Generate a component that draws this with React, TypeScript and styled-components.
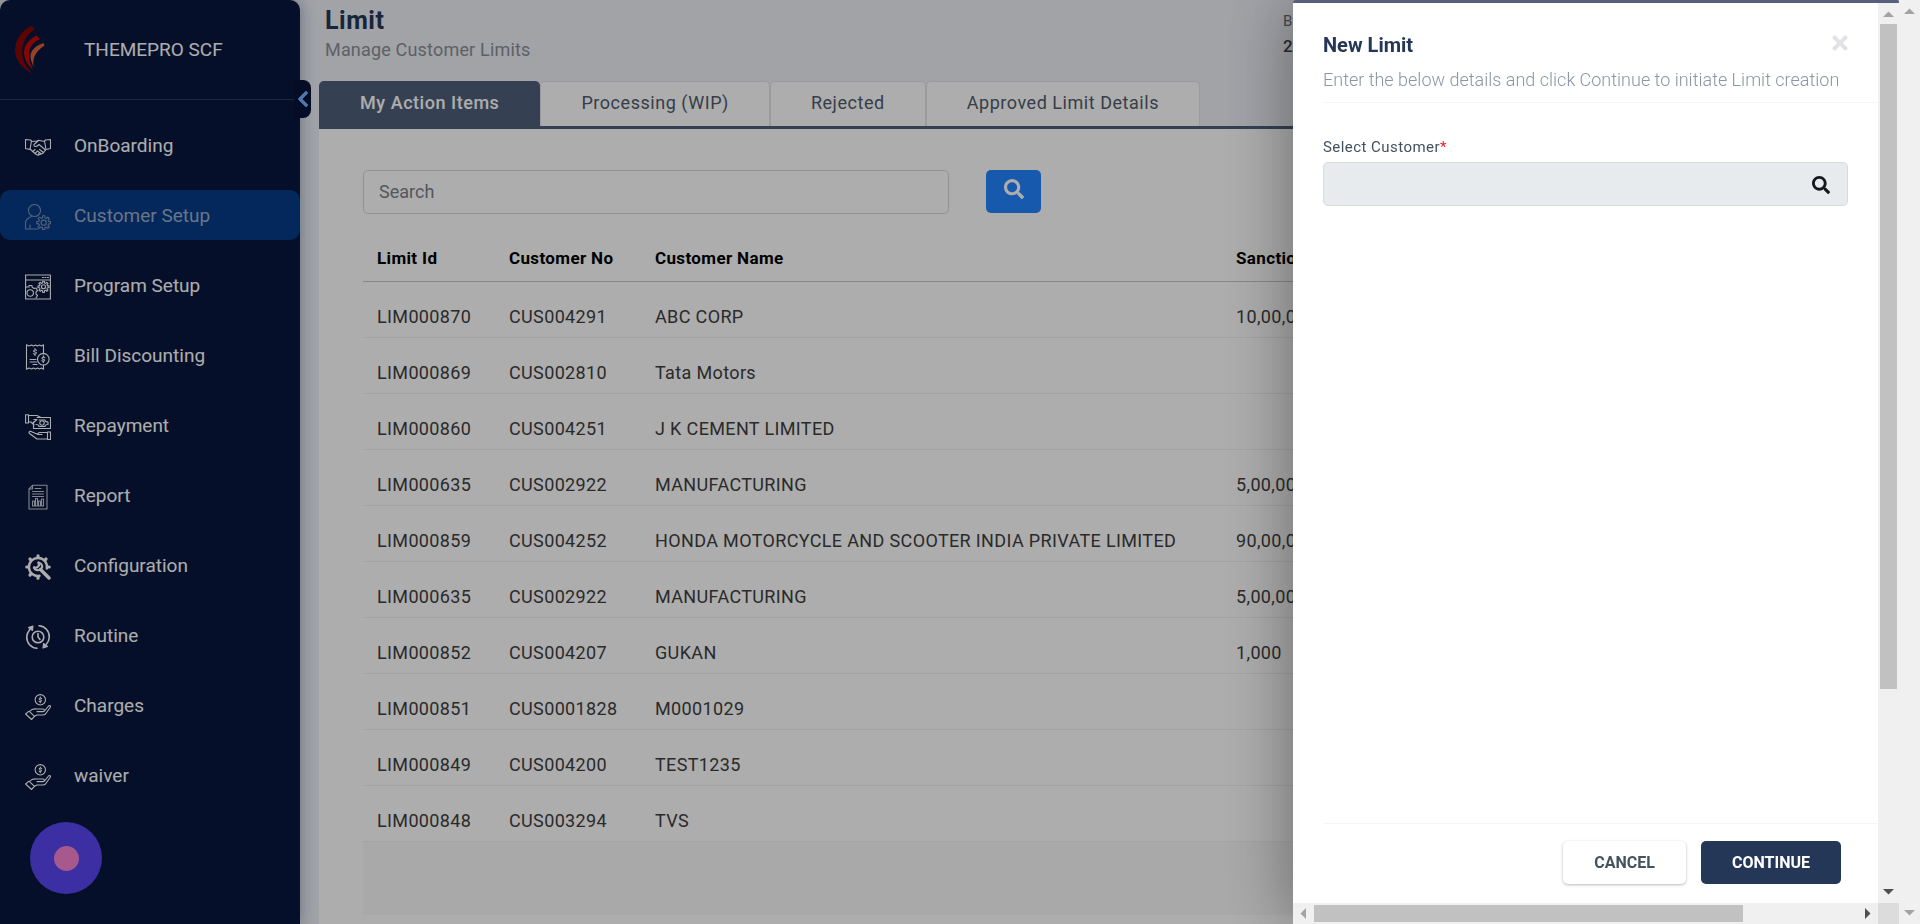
import React from "react";
import styled, { createGlobalStyle, css } from "styled-components";
import { FaChevronLeft, FaSearch, FaTimes } from "react-icons/fa";

const GlobalStyle = createGlobalStyle`
  *, *::before, *::after { box-sizing: border-box; }
  body {
    margin: 0;
    font-family: Roboto, "Liberation Sans", sans-serif;
    font-size: 18px;
    line-height: 24px;
    color: #3e3e3e;
    overflow: hidden;
  }
  button, input { font: inherit; letter-spacing: inherit; }
`;

const Page = styled.div`
  display: flex;
  height: 100vh;
  overflow: hidden;
  background: #edf0f7;
`;

const Shell = styled.div`
  position: relative;
  display: flex;
  flex: 1;
  min-width: 0;
`;

const Backdrop = styled.div`
  position: absolute;
  inset: 0;
  z-index: 2;
  background: rgba(0, 0, 0, 0.32);
`;

/* Sidebar */

const Sidebar = styled.aside`
  position: relative;
  z-index: 1;
  flex: none;
  width: 300px;
  background: #09173d;
  border-radius: 10px 10px 0 0;
  box-shadow: 0 0 16px rgba(20, 40, 70, 0.4);
  color: #fff;
  font-size: 19px;
`;

const Brand = styled.div`
  display: flex;
  align-items: center;
  gap: 39px;
  height: 100px;
  margin-right: 5px;
  padding-left: 15px;
  border-bottom: 1px solid #2b3558;
`;

const CollapseButton = styled.button`
  position: absolute;
  top: 80px;
  right: -11px;
  display: flex;
  align-items: center;
  justify-content: center;
  width: 17px;
  height: 38px;
  padding: 0;
  border: 0;
  border-radius: 0 8px 8px 0;
  background: #061238;
  color: #74b0ff;
  font-size: 18px;

  svg {
    flex: none;
    stroke: currentColor;
    stroke-width: 24;
  }
`;

const NavList = styled.ul`
  display: flex;
  flex-direction: column;
  gap: 20px;
  margin: 0;
  padding: 20px 0 0;
  list-style: none;
`;

const NavLink = styled.a<{ $active?: boolean }>`
  display: flex;
  align-items: center;
  gap: 23px;
  height: 50px;
  padding: 2px 0 0 25px;
  border-radius: 10px;
  color: #fff;
  text-decoration: none;
  ${(p) =>
    p.$active &&
    css`
      background: #073b86;
      color: #9cadc9;
    `}
`;

const NavIcon = styled.svg<{ $faint?: boolean }>`
  flex: none;
  width: 26px;
  height: 26px;
  margin-top: 1px;
  fill: none;
  stroke: currentColor;
  stroke-width: 1.1;
  stroke-linejoin: round;
  stroke-linecap: round;
  opacity: ${(p) => (p.$faint ? 0.75 : 1)};
`;

const HelpBubble = styled.button`
  position: fixed;
  left: 30px;
  bottom: 30px;
  display: flex;
  align-items: center;
  justify-content: center;
  width: 72px;
  height: 72px;
  padding: 0;
  border: 0;
  border-radius: 50%;
  background: #5746f0;
`;

const BubbleDot = styled.span`
  width: 25px;
  height: 25px;
  border-radius: 50%;
  background: #f783d2;
`;

/* Main area */

const Main = styled.main`
  display: flex;
  flex: 1;
  flex-direction: column;
  min-width: 0;
  padding: 0 15px 0 19px;
`;

const PageHeader = styled.header`
  display: flex;
  justify-content: space-between;
  height: 81px;
  padding: 5px 0 0 6px;
`;

const PageTitle = styled.h1`
  margin: 0;
  font-size: 25px;
  line-height: 32px;
  font-weight: 700;
  letter-spacing: 0.02em;
  color: #243757;
`;

const PageSubtitle = styled.p`
  margin: 1px 0 0;
  letter-spacing: 0.01em;
  color: #8a8f98;
`;

const DateBlock = styled.dl`
  width: 601px;
  margin: 4px 0 0;
`;

const DateLabel = styled.dt`
  font-size: 15px;
  color: #666c78;
`;

const DateValue = styled.dd`
  margin: 1px 0 0;
  font-size: 17px;
  font-weight: 500;
  color: #3a3f4b;
`;

const Tabs = styled.div`
  display: flex;
  flex: none;
  height: 48px;
  border-bottom: 3px solid #505f7b;
`;

const Tab = styled.button<{ $active?: boolean }>`
  padding: 0 40px 2px;
  border: 1px solid #e2e5ea;
  border-bottom: 0;
  border-radius: 5px 5px 0 0;
  background: #fff;
  color: #505c6e;
  letter-spacing: 0.03em;
  ${(p) =>
    p.$active &&
    css`
      border-color: #505f7b;
      background: #505f7b;
      color: #fff;
      font-weight: 500;
    `}
`;

const Panel = styled.section`
  flex: 1;
  padding: 41px 44px 9px;
  background: #fff;
`;

const SearchForm = styled.form`
  display: flex;
  gap: 37px;
`;

const SearchInput = styled.input`
  width: 586px;
  height: 44px;
  padding: 0 15px;
  border: 1px solid #d3d6da;
  border-radius: 5px;
  background: #fff;
  &::placeholder { color: #7b828a; opacity: 1; }
`;

const SearchButton = styled.button`
  display: flex;
  justify-content: center;
  width: 55px;
  height: 43px;
  padding: 9px 0 0;
  border: 0;
  border-radius: 5px;
  background: #2384ff;
  color: #fff;
  font-size: 20px;
`;

const LimitTable = styled.table`
  width: 100%;
  margin-top: 21px;
  border-collapse: collapse;
  table-layout: fixed;
  letter-spacing: 0.02em;
`;

const HeadCell = styled.th`
  height: 47px;
  padding: 0 14px;
  border-bottom: 1px solid #c6c8cb;
  color: #000;
  font-size: 17px;
  font-weight: 700;
  text-align: left;
  white-space: nowrap;
`;

const Cell = styled.td`
  height: 56px;
  padding: 15px 14px 0;
  border-bottom: 1px solid #f2f2f2;
  white-space: nowrap;
`;

const TableFoot = styled.div`
  height: 73px;
  background: #f9f9f9;
`;

/* Drawer */

const Drawer = styled.section`
  position: absolute;
  top: 0;
  right: 0;
  bottom: 0;
  z-index: 3;
  display: flex;
  flex-direction: column;
  width: 606px;
  border-top: 3px solid #55607b;
  border-radius: 3px 3px 0 0;
  background: #fff;
  box-shadow: 0 0 70px rgba(0, 0, 0, 0.4);
`;

const DrawerRow = styled.div`
  display: flex;
  flex: 1;
  min-height: 0;
`;

const DrawerContent = styled.div`
  display: flex;
  flex: 1;
  flex-direction: column;
  min-width: 0;
  padding-left: 30px;
`;

const DrawerHeader = styled.header`
  height: 100px;
  padding: 28px 27px 0 0;
  border-bottom: 1px solid #f5f5f6;
`;

const TitleRow = styled.div`
  display: flex;
  justify-content: space-between;
`;

const DrawerTitle = styled.h2`
  margin: 0;
  font-size: 20px;
  line-height: 28px;
  font-weight: 700;
  color: #243757;
`;

const CloseButton = styled.button`
  display: flex;
  align-items: center;
  height: 24px;
  padding: 0;
  border: 0;
  background: none;
  color: #e0e2e6;
  font-size: 22px;
`;

const DrawerText = styled.p`
  margin: 9px 0 0;
  font-weight: 300;
  color: #8c95a3;
  white-space: nowrap;
`;

const DrawerForm = styled.form`
  display: flex;
  flex: 1;
  flex-direction: column;
  padding: 32px 30px 0 0;
`;

const FieldLabel = styled.label`
  font-size: 15px;
  letter-spacing: 0.03em;
  color: #45505e;
`;

const Required = styled.span`
  color: #f0182c;
`;

const Field = styled.div`
  display: flex;
  align-items: center;
  height: 44px;
  margin-top: 3px;
  padding-right: 17px;
  border: 1px solid #d8dce1;
  border-radius: 5px;
  background: #e7ebee;
`;

const FieldInput = styled.input`
  flex: 1;
  min-width: 0;
  height: 100%;
  padding: 0 14px;
  border: 0;
  background: none;
`;

const LookupButton = styled.button`
  display: flex;
  padding: 1px 0 0;
  border: 0;
  background: none;
  color: #15181c;
  font-size: 18px;
`;

const DrawerFooter = styled.footer`
  display: flex;
  justify-content: flex-end;
  gap: 15px;
  height: 80px;
  padding: 17px 37px 0 0;
  border-top: 1px solid #f5f5f6;
`;

const Action = styled.button<{ $primary?: boolean }>`
  height: 43px;
  padding: 0 31px;
  border: 0;
  border-radius: 5px;
  background: ${(p) => (p.$primary ? "#253756" : "#fff")};
  color: ${(p) => (p.$primary ? "#fff" : "#45525f")};
  box-shadow: ${(p) => (p.$primary ? "none" : "0 1px 3px rgba(0, 0, 0, 0.28)")};
  font-size: 16px;
  font-weight: 700;
`;

/* Scroll bars */

const ScrollColumn = styled.div`
  position: relative;
  z-index: 4;
  display: flex;
  flex: none;
  flex-direction: column;
  align-items: center;
  justify-content: space-between;
  width: 21px;
  background: #f0f0f0;
`;

const ScrollRow = styled.div`
  display: flex;
  flex: none;
  height: 21px;
  background: #f0f0f0;
`;

const ArrowBox = styled.svg<{ $dark?: boolean }>`
  flex: none;
  width: 21px;
  height: 21px;
  fill: ${(p) => (p.$dark ? "#505050" : "#a3a3a3")};
`;

const VerticalTrack = styled.div`
  flex: 1;
  width: 17px;
`;

const VerticalThumb = styled.div`
  height: 77.5%;
  background: #c1c1c1;
`;

const HorizontalTrack = styled.div`
  flex: 1;
  padding: 2px 0;
`;

const HorizontalThumb = styled.div`
  width: 79%;
  height: 17px;
  background: #c1c1c1;
`;

const ScrollCorner = styled.div`
  width: 21px;
  background: #dcdcdc;
`;

type Direction = "up" | "down" | "left" | "right";

const arrowPaths: Record<Direction, string> = {
  up: "M5 14 L10.5 8.5 L16 14Z",
  down: "M5 7 L10.5 12.5 L16 7Z",
  left: "M13 5 L7.5 10.5 L13 16Z",
  right: "M8 5 L13.5 10.5 L8 16Z",
};

const Arrow = ({ to, dark }: { to: Direction; dark?: boolean }) => (
  <ArrowBox viewBox="0 0 21 21" $dark={dark} aria-hidden="true">
    <path d={arrowPaths[to]} />
  </ArrowBox>
);

/* Drawings */

const gear = (cx: number, cy: number, inner: number, outer: number, teeth = 8) => {
  const points: string[] = [];
  const step = (Math.PI * 2) / teeth;
  for (let i = 0; i < teeth; i++) {
    const a = i * step;
    [
      [-0.3, inner],
      [-0.2, outer],
      [0.2, outer],
      [0.3, inner],
    ].forEach(([t, r]) => {
      const angle = a + t * step;
      points.push(`${(cx + r * Math.cos(angle)).toFixed(2)} ${(cy + r * Math.sin(angle)).toFixed(2)}`);
    });
  }
  return `M${points.join("L")}Z`;
};

const dollar = (cx: number, cy: number, s: number) =>
  `M${cx + s} ${cy - s}C${cx} ${cy - 2 * s} ${cx - 2 * s} ${cy - s / 2} ${cx} ${cy}` +
  `C${cx + 2 * s} ${cy + s / 2} ${cx} ${cy + 2 * s} ${cx - s} ${cy + s}` +
  `M${cx} ${cy - 2.2 * s}V${cy - 1.4 * s}M${cx} ${cy + 1.4 * s}V${cy + 2.2 * s}`;

const Logo = () => (
  <svg width="30" height="48" viewBox="0 0 30 48" aria-hidden="true">
    <path fill="#8a0705" d="M16 0C5 6 0 15 0 25C1 35 7 42 18 48C10 40 7 33 7 26C7 17 12 8 20 3Z" />
    <path fill="#c60a06" d="M21.500 9.500C13 14 9 20 9 27C9.500 34 13 39 18 44C15 38 13.500 32 14 27C14.500 21 18 16 25 13Z" />
    <path fill="#de6236" d="M28.500 17C20 20 15.500 25 15.500 30C15.500 34 17 37 18.700 41C17.500 34 18.500 27 29.500 19.500Z" />
  </svg>
);

const HandshakeIcon = () => (
  <NavIcon viewBox="0 0 26 26">
    <path d="M.5 5.500L5.500 6L6.500 7L5 15.500L.5 14.500Z M25.500 5.500L20.500 6L19.500 7L21 15.500L25.500 14.500Z" />
    <path d="M6.500 7.500L12 7L13.500 6.200L19.500 7.500M13 7L9 10.500C8.500 13 11 13.500 14 10.500L20.500 16" />
    <path d="M5 15L10.500 20L13 21.300L15 20.500L17.500 19.500L19 18L20.500 16M8 17.500L10 15.500M10 19.500L12.500 17M13 21L14.500 18.500M14.500 15.500L18.500 18.500M13 17.500L16.500 20" />
  </NavIcon>
);

const CustomerIcon = () => (
  <NavIcon viewBox="0 0 26 26" $faint>
    <circle cx="9.500" cy="6.500" r="6" />
    <path d="M6.500 12.500C3 14 .5 16 .5 19V25H13M5 21V25" />
    <path d={gear(18.7, 18.7, 5, 7)} />
    <circle cx="18.700" cy="18.700" r="2.600" />
  </NavIcon>
);

const ProgramIcon = () => (
  <NavIcon viewBox="0 0 26 26">
    <path d="M.6 1H25.400V25H.6ZM.6 6H25.400M17.500 3.500H18.500M20 3.500H21M22.500 3.500H23.500" />
    <path d={gear(18.5, 12.8, 4, 5.6)} />
    <circle cx="18.500" cy="12.800" r="2" />
    <circle cx="5.200" cy="19" r="3.200" />
    <path d="M1 13H4V11.500H7V13L9 14.500L11 14L12.500 16.500L11 18V20L12.500 21.500L11 24" />
  </NavIcon>
);

const BillIcon = () => (
  <NavIcon viewBox="0 0 26 26">
    <path d="M18.500 10V.8L16.500 2L14.500 1L12.500 2L10.500 1L8.500 2L6.500 1L4 2L1.500 .8V25.200L4 24L6.500 25L8.500 24L10.500 25L12.500 24L14.500 25L16.500 24L18.500 25.200V21" />
    <circle cx="18.300" cy="15.200" r="5.800" />
    <path d={dollar(10, 8, 1.6)} />
    <path d={dollar(18.3, 15.2, 1.5)} />
    <path d="M5 15.500H11M5 18H11.500M8 20.500H12" />
  </NavIcon>
);

const RepaymentIcon = () => (
  <NavIcon viewBox="0 0 26 26">
    <path d="M.6 .8H3.500V9H.6ZM3.500 1.500H12L16 3.500M3.500 8H6L9 11M9 5.500L12 5.500L8 9" />
    <path d="M12 3.500H25.500V14.500H8.500V8" />
    <path d="M14 6H20C20 7.500 21 8 23 8V10.500C21 10.500 20 11 20 12.500H14C14 11 13 10.500 11 10.500" />
    <circle cx="17" cy="9" r="2.200" />
    <path d="M22.500 18H25.500V25.500H22.500ZM22.500 18.500H15C13 18.500 12.500 20 13 20.500H17M13 20.500L6 17.500C4 17 3.500 18.500 4.500 19.500L12 25H22.500" />
  </NavIcon>
);

const ReportIcon = () => (
  <NavIcon viewBox="0 0 26 26" $faint>
    <path d="M7.500 1.300H22V25H4V5ZM7.500 1.300V5H4M10 4.500H16M7.500 7.500H18.500M7.500 10H18.500M7.500 12.500H18.500" />
    <path d="M7.500 22V17H9.500V22ZM10.500 22V14.500H12.500V22ZM13.500 22V17H15.500V22ZM16.500 22V15H18.500V22Z" />
  </NavIcon>
);

const ConfigurationIcon = () => (
  <NavIcon viewBox="0 0 26 26">
    <path strokeWidth="2.400" d="M21.800 14.500A9 9 0 1 0 14.500 21.800" />
    <path
      strokeWidth="3.200"
      d="M13 1.800V3M13 23V24.200M1.800 13H3M23 13H24.200M5 5L5.800 5.800M20.200 5.800L21 5M5 21L5.800 20.200"
    />
    <path strokeWidth="3.400" d="M15.500 15.500L24 24" />
    <path strokeWidth="2.200" d="M13.500 8.500C16.500 9 18 12 16.500 14.500C15 17 10.500 17 9 13.500" />
    <path strokeWidth="2.200" d="M13.500 8.500L14 11.500L12 13.500L9 13.500" />
  </NavIcon>
);

const RoutineIcon = () => (
  <NavIcon viewBox="0 0 26 26">
    <path strokeWidth="1.600" d="M14 1.800C20 2.200 24.300 7 24.300 13C24.300 16 23 18.500 21 20.800M12 24.200C6 23.800 1.700 19 1.700 13C1.700 10 3 7.500 5 5.200" />
    <path fill="currentColor" d="M3.500 3.500L8 2L7.500 6.500ZM22.500 22.500L18 24L18.500 19.500Z" />
    <circle strokeWidth="1.600" cx="13" cy="13" r="5.800" />
    <path strokeWidth="1.600" d="M13 9.500V13L15 15.500" />
  </NavIcon>
);

const HandCoinIcon = () => (
  <NavIcon viewBox="0 0 26 26">
    <circle cx="15.300" cy="5.800" r="5.200" />
    <path d={dollar(15.3, 5.8, 1.3)} />
    <path d="M.6 20L4 17.200L9.500 22.300L6.500 25.500Z" />
    <path d="M4.500 17.500C7 14.500 9 14.500 12 15H18C20 15.200 19.800 17.600 18 17.600H12M19.500 17L23.500 12C24.500 11 26 12 25.300 13.300L20.500 20C19.500 21 18.500 21 17.500 21H12L9.500 22.300" />
  </NavIcon>
);

/* Content */

const navItems = [
  { label: "OnBoarding", Icon: HandshakeIcon },
  { label: "Customer Setup", Icon: CustomerIcon, active: true },
  { label: "Program Setup", Icon: ProgramIcon },
  { label: "Bill Discounting", Icon: BillIcon },
  { label: "Repayment", Icon: RepaymentIcon },
  { label: "Report", Icon: ReportIcon },
  { label: "Configuration", Icon: ConfigurationIcon },
  { label: "Routine", Icon: RoutineIcon },
  { label: "Charges", Icon: HandCoinIcon },
  { label: "waiver", Icon: HandCoinIcon },
];

const tabs = ["My Action Items", "Processing (WIP)", "Rejected", "Approved Limit Details"];

const limits = [
  ["LIM000870", "CUS004291", "ABC CORP", "10,00,000"],
  ["LIM000869", "CUS002810", "Tata Motors", ""],
  ["LIM000860", "CUS004251", "J K CEMENT LIMITED", ""],
  ["LIM000635", "CUS002922", "MANUFACTURING", "5,00,000"],
  ["LIM000859", "CUS004252", "HONDA MOTORCYCLE AND SCOOTER INDIA PRIVATE LIMITED", "90,00,000"],
  ["LIM000635", "CUS002922", "MANUFACTURING", "5,00,000"],
  ["LIM000852", "CUS004207", "GUKAN", "1,000"],
  ["LIM000851", "CUS0001828", "M0001029", ""],
  ["LIM000849", "CUS004200", "TEST1235", ""],
  ["LIM000848", "CUS003294", "TVS", ""],
];

const NewLimitDrawer = () => (
  <Drawer role="dialog" aria-labelledby="drawer-title">
    <DrawerRow>
      <DrawerContent>
        <DrawerHeader>
          <TitleRow>
            <DrawerTitle id="drawer-title">New Limit</DrawerTitle>
            <CloseButton type="button" aria-label="Close">
              <FaTimes />
            </CloseButton>
          </TitleRow>
          <DrawerText>Enter the below details and click Continue to initiate Limit creation</DrawerText>
        </DrawerHeader>
        <DrawerForm id="limit-form">
          <FieldLabel htmlFor="customer">
            Select Customer<Required>*</Required>
          </FieldLabel>
          <Field>
            <FieldInput id="customer" readOnly />
            <LookupButton type="button" aria-label="Find customer">
              <FaSearch />
            </LookupButton>
          </Field>
        </DrawerForm>
        <DrawerFooter>
          <Action type="button">CANCEL</Action>
          <Action type="submit" form="limit-form" $primary>
            CONTINUE
          </Action>
        </DrawerFooter>
      </DrawerContent>
      <ScrollColumn>
        <Arrow to="up" />
        <VerticalTrack>
          <VerticalThumb />
        </VerticalTrack>
        <Arrow to="down" dark />
      </ScrollColumn>
    </DrawerRow>
    <ScrollRow>
      <Arrow to="left" />
      <HorizontalTrack>
        <HorizontalThumb />
      </HorizontalTrack>
      <Arrow to="right" dark />
      <ScrollCorner />
    </ScrollRow>
  </Drawer>
);

export default function App() {
  return (
    <>
      <GlobalStyle />
      <Page>
        <Shell>
          <Sidebar>
            <Brand>
              <Logo />
              THEMEPRO SCF
            </Brand>
            <nav>
              <NavList>
                {navItems.map(({ label, Icon, active }) => (
                  <li key={label}>
                    <NavLink href="#" $active={active} aria-current={active ? "page" : undefined}>
                      <Icon />
                      {label}
                    </NavLink>
                  </li>
                ))}
              </NavList>
            </nav>
            <CollapseButton type="button" aria-label="Collapse menu">
              <FaChevronLeft />
            </CollapseButton>
            <HelpBubble type="button" aria-label="Help">
              <BubbleDot />
            </HelpBubble>
          </Sidebar>
          <Main>
            <PageHeader>
              <div>
                <PageTitle>Limit</PageTitle>
                <PageSubtitle>Manage Customer Limits</PageSubtitle>
              </div>
              <DateBlock>
                <DateLabel>Business Year</DateLabel>
                <DateValue>2022</DateValue>
              </DateBlock>
            </PageHeader>
            <Tabs role="tablist">
              {tabs.map((tab, i) => (
                <Tab key={tab} type="button" role="tab" aria-selected={i === 0} $active={i === 0}>
                  {tab}
                </Tab>
              ))}
            </Tabs>
            <Panel>
              <SearchForm role="search">
                <SearchInput type="search" placeholder="Search" aria-label="Search limits" />
                <SearchButton type="button" aria-label="Search">
                  <FaSearch />
                </SearchButton>
              </SearchForm>
              <LimitTable>
                <colgroup>
                  <col width="132" />
                  <col width="146" />
                  <col />
                  <col width="618" />
                </colgroup>
                <thead>
                  <tr>
                    <HeadCell scope="col">Limit Id</HeadCell>
                    <HeadCell scope="col">Customer No</HeadCell>
                    <HeadCell scope="col">Customer Name</HeadCell>
                    <HeadCell scope="col">Sanction Limit</HeadCell>
                  </tr>
                </thead>
                <tbody>
                  {limits.map((row, i) => (
                    <tr key={i}>
                      {row.map((value, j) => (
                        <Cell key={j}>{value}</Cell>
                      ))}
                    </tr>
                  ))}
                </tbody>
              </LimitTable>
              <TableFoot />
            </Panel>
          </Main>
          <Backdrop />
          <NewLimitDrawer />
        </Shell>
        <ScrollColumn>
          <Arrow to="up" />
          <Arrow to="down" />
        </ScrollColumn>
      </Page>
    </>
  );
}
